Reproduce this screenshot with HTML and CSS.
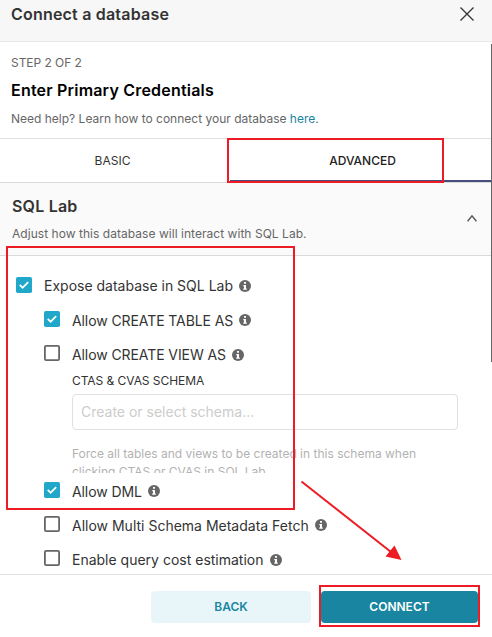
FILE: index.html
```
<!DOCTYPE html>
<html lang="en">
<head>
<meta charset="utf-8">
<title>Connect a database</title>
<link rel="stylesheet" href="styles.css">
</head>
<body>
<svg class="defs" width="0" height="0">
  <symbol id="info" viewBox="0 0 12 12"><circle cx="6" cy="6" r="6" fill="#666"/><path d="M5 2h2v1.7H5zM4.3 5H7v3.4h.8v1.3H4.2V8.4H5V6.2h-.7z" fill="#fff"/></symbol>
  <symbol id="on" viewBox="0 0 16 16"><rect width="16" height="16" rx="1.8" fill="#20a7c9"/><path d="M3.7 7.8l2.900 2.900 5.600-5.600" fill="none" stroke="#fff" stroke-width="1.7"/></symbol>
  <symbol id="off" viewBox="0 0 16 16"><rect x=".9" y=".9" width="14.2" height="14.2" rx="1.2" fill="#fff" stroke="#666" stroke-width="1.8"/></symbol>
</svg>
<div class="modal">
  <header class="header">
    <h1 class="title">Connect a database</h1>
    <svg class="close" viewBox="0 0 14 14"><path d="M.5.5l13 13M13.5.5l-13 13" fill="none" stroke="#333" stroke-width="1.3"/></svg>
  </header>
  <section class="intro">
    <p class="step">STEP 2 OF 2</p>
    <h2 class="heading">Enter Primary Credentials</h2>
    <p class="help">Need help? Learn how to connect your database <a class="link">here</a>.</p>
  </section>
  <nav class="tabs">
    <div class="tab">BASIC</div>
    <div class="tab tab-active">ADVANCED</div>
  </nav>
  <section class="panel-head">
    <div>
      <h3 class="panel-title">SQL Lab</h3>
      <p class="panel-text">Adjust how this database will interact with SQL Lab.</p>
    </div>
    <svg class="chevron" viewBox="0 0 10 7"><path d="M.6 6.300L5 .9l4.400 5.400" fill="none" stroke="#555" stroke-width="1.4"/></svg>
  </section>
  <section class="options">
    <div class="row"><svg class="box"><use href="#on"/></svg><span class="label">Expose database in SQL Lab</span><svg class="info"><use href="#info"/></svg></div>
    <div class="nested">
      <div class="row"><svg class="box"><use href="#on"/></svg><span class="label tight">Allow CREATE TABLE AS</span><svg class="info"><use href="#info"/></svg></div>
      <div class="row"><svg class="box"><use href="#off"/></svg><span class="label tight">Allow CREATE VIEW AS</span><svg class="info"><use href="#info"/></svg></div>
      <div class="schema">
        <div class="schema-label">CTAS &amp; CVAS SCHEMA</div>
        <div class="input">Create or select schema...</div>
        <p class="hint">Force all tables and views to be created in this schema when clicking CTAS or CVAS in SQL Lab.</p>
      </div>
      <div class="row"><svg class="box"><use href="#on"/></svg><span class="label tight">Allow DML</span><svg class="info"><use href="#info"/></svg></div>
      <div class="row"><svg class="box"><use href="#off"/></svg><span class="label">Allow Multi Schema Metadata Fetch</span><svg class="info"><use href="#info"/></svg></div>
      <div class="row"><svg class="box"><use href="#off"/></svg><span class="label">Enable query cost estimation</span><svg class="info"><use href="#info"/></svg></div>
    </div>
  </section>
  <footer class="footer">
    <div class="button back">BACK</div>
    <div class="button connect">CONNECT</div>
  </footer>
  <div class="scrollbar"></div>
  <svg class="marks" viewBox="0 0 492 637" fill="none" stroke="#ed1c24" stroke-width="2">
    <rect x="228" y="139" width="215" height="43"/>
    <rect x="7" y="247" width="287" height="262"/>
    <rect x="320" y="586" width="159" height="40"/>
    <path d="M301.500 481.500L391 552"/>
    <path d="M401.500 560L394.500 545.500 385.500 556.500z" fill="#ed1c24" stroke="none"/>
  </svg>
</div>
</body>
</html>
```
FILE: styles.css
```
* { box-sizing: border-box; }
body { margin: 0; font-family: Inter, "Liberation Sans", sans-serif; color: #333; background: #fff; }
h1, h2, h3, p { margin: 0; }
.defs { position: absolute; }
.modal { position: relative; width: 492px; height: 637px; overflow: hidden; display: flex; flex-direction: column; }
.header { height: 42px; flex: none; background: #f7f7f7; border-bottom: 1px solid #e8e8e8; display: flex; justify-content: space-between; padding: 4px 18px 0 11px; }
.title { font-size: 16px; line-height: 20px; font-weight: 600; letter-spacing: 0.2px; }
.close { width: 14px; height: 14px; margin-top: 3px; }
.intro { height: 96px; flex: none; padding: 12px 12px 0 11px; }
.step { font-size: 12px; line-height: 18px; color: #666; letter-spacing: -0.05px; }
.heading { font-size: 16px; line-height: 20px; font-weight: 600; color: #000; margin-top: 8px; letter-spacing: 0.2px; }
.help { font-size: 12px; line-height: 18px; color: #666; margin-top: 10px; }
.link { color: #1985a0; }
.tabs { height: 45px; flex: none; display: flex; border-top: 1px solid #e0e0e0; border-bottom: 1px solid #d9d9d9; padding-right: 1px; }
.tab { width: 230px; text-align: center; font-size: 12px; line-height: 43px; padding-right: 5px; }
.tab-active { flex: 1; width: auto; padding: 0 0 0 4px; border-bottom: 2px solid #454e7c; font-weight: 500; color: #222; }
.panel-head { height: 73px; flex: none; background: #fafafa; border-bottom: 1px solid #d9d9d9; display: flex; justify-content: space-between; padding: 13px 15px 0 12px; }
.panel-title { font-size: 16px; line-height: 20px; font-weight: 600; letter-spacing: 0.2px; }
.panel-text { font-size: 12px; line-height: 18px; color: #666; margin-top: 9px; letter-spacing: 0.04px; }
.chevron { width: 10px; height: 7px; margin-top: 19px; }
.options { flex: 1; min-height: 0; overflow: hidden; padding: 12.5px 16px 0; }
.nested { padding-left: 28px; }
.row { height: 34.3px; display: flex; align-items: center; }
.box { width: 16px; height: 16px; margin-right: 12px; position: relative; top: -1px; }
.label { font-size: 14px; line-height: 20px; }
.nested .label { padding-top: 2px; }
.nested .info { margin-top: 1px; }
.tight { letter-spacing: -0.09px; }
.info { width: 12px; height: 12px; margin-left: 6px; }
.schema { padding: 1px 0 0 28px; height: 102px; overflow: hidden; }
.schema-label { font-size: 12px; line-height: 18px; letter-spacing: -0.06px; }
.input { width: 386px; height: 36px; margin-top: 4px; border: 1px solid #e0e0e0; border-radius: 4px; padding-left: 8px; font-size: 14px; line-height: 34px; color: #ccc; }
.hint { width: 360px; font-size: 12px; line-height: 18px; color: #b2b2b2; margin-top: 15px; }
.footer { height: 63px; flex: none; border-top: 1px solid #e0e0e0; background: #fff; display: flex; justify-content: flex-end; gap: 10px; padding: 16px 14px 0 0; }
.button { height: 32px; line-height: 32px; border-radius: 4px; font-size: 12px; font-weight: 600; text-align: center; }
.back { width: 160px; background: #e9f6f9; color: #1985a0; }
.connect { width: 157px; background: #1985a0; color: #fff; }
.scrollbar { position: absolute; right: 0; top: 44px; width: 1px; height: 318px; background: #666; }
.marks { position: absolute; left: 0; top: 0; width: 492px; height: 637px; }
```
